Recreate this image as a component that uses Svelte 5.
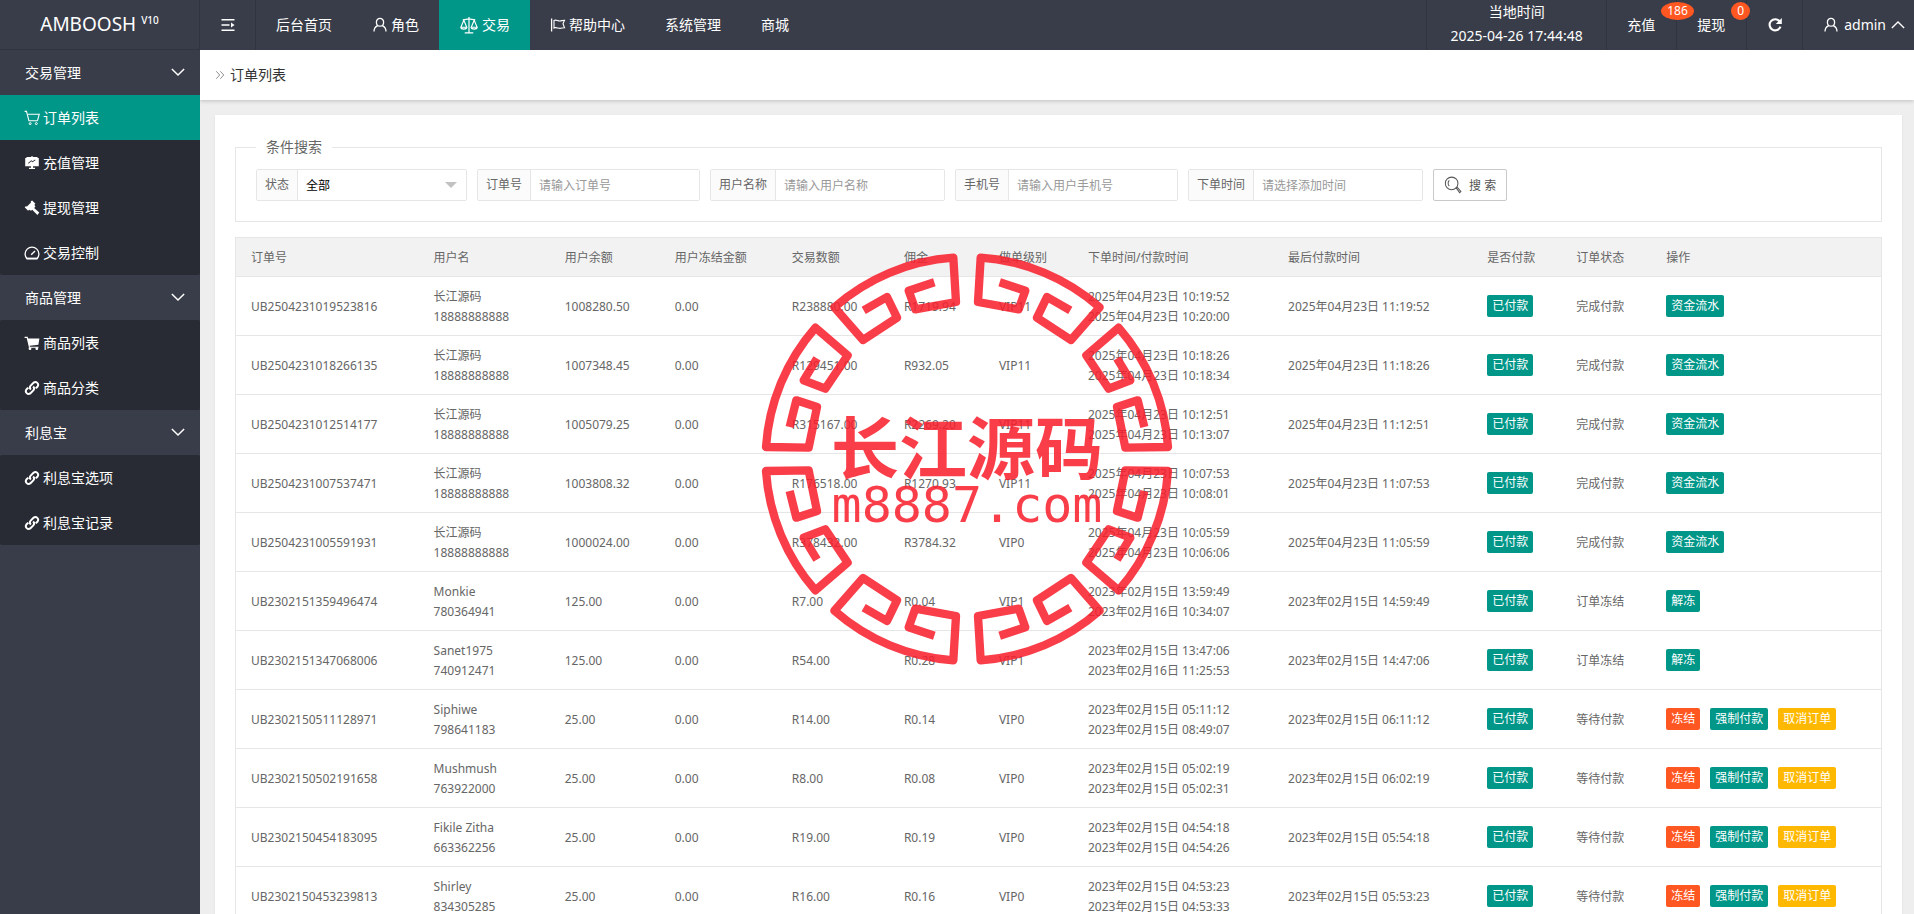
<script lang="ts">
  type Shape = { d: string; fill?: boolean; width?: number };
  type Action = { text: string; tone: string };

  // all icons live on a 16x16 grid
  const icons: Record<string, Shape[]> = {
    toggle: [
      { d: 'M1.5 2.8h13M1.5 8h8M1.5 13.2h13', width: 1.6 },
      { d: 'M11 5.6v4.8L14.6 8z', fill: true }
    ],
    user: [
      { d: 'M8 1.4a3.6 3.6 0 0 1 3.6 3.8c0 2.2-1.5 4-3.6 4s-3.6-1.8-3.6-4A3.6 3.6 0 0 1 8 1.4z', width: 1.3 },
      { d: 'M5.7 8.6C3.4 9.6 2 11.7 2 14.6M10.3 8.6c2.3 1 3.7 3.1 3.7 6', width: 1.3 }
    ],
    scale: [
      { d: 'M8 .8v13.7M4.2 15h7.6M2.4 3.4C4.5 3.6 6 2.6 8 2.6s3.5 1 5.6.8', width: 1.1 },
      { d: 'M3.4 3.8L.8 10h5.2zM12.6 3.8L10 10h5.2z', width: 1 },
      { d: 'M.8 10.2c.4 2 4.8 2 5.2 0M10 10.2c.4 2 4.8 2 5.2 0', width: 1.2 }
    ],
    flag: [
      { d: 'M1.6 1.5v13', width: 1.3 },
      { d: 'M4 3.4c2-1.2 4 .9 6 .6 1.5-.1 2.7-.8 4.5-.8L13 6.7l1.5 4c-2 0-3 .7-4.5.7-2 0-4-1.5-6-.4z', width: 1.1 }
    ],
    cartLine: [
      { d: 'M.6 1.4h1.9l2.4 9.3h8.7M4 4.3h11.2l-1.7 6.4', width: 1.1 },
      { d: 'M6.2 12.6a1 1 0 1 1 0 2 1 1 0 0 1 0-2zM12.3 12.6a1 1 0 1 1 0 2 1 1 0 0 1 0-2z', width: 1 }
    ],
    board: [
      { d: 'M2.5 2h4.300l1.200-1 1.200 1h4.300v1h1.300v8.300H9v1.500h2V14H5v-1.200h2v-1.500H1.200V3h1.300zM4.500 8.700l2.800-2.500 1.200 1 3-2-.4-.6-2.500 1.700-1.300-1-3.200 2.800z', fill: true }
    ],
    gavel: [
      { d: 'M8.2.6l3.200 3.200-1 .9 1 2-1.300 1.300 5.200 4.600-1.900 2.300-5.200-5.200-1.100 1.100-2-1-1 .9-3.400-3.500 1-1 1.300.3 4-4-.3-1.300z', fill: true }
    ],
    gauge: [
      { d: 'M3 13.8A6.900 6.900 0 1 1 13 13.800z', width: 1.3 },
      { d: 'M7.2 9.8L11 6', width: 1.4 },
      { d: 'M2.5 12.600h11v1.500h-11z', fill: true }
    ],
    cart: [
      { d: 'M.6 1.800h3l.6 1.700h11.200l-1 6.200-8.800 1 .3 1h8.600v1H5L2.700 3H.6z', fill: true },
      { d: 'M6 12.300a1.400 1.400 0 1 1 0 2.800 1.400 1.400 0 0 1 0-2.800zM12.800 12.300a1.400 1.400 0 1 1 0 2.800 1.400 1.400 0 0 1 0-2.800z', fill: true }
    ],
    link: [
      { d: 'M6.900 9.500a2.800 2.800 0 0 1-.2-3.900l3-3a2.800 2.800 0 0 1 3.900 3.900l-1.900 1.900', width: 2 },
      { d: 'M9.100 6.500a2.800 2.800 0 0 1 .2 3.900l-3 3a2.800 2.800 0 0 1-3.900-3.900l1.900-1.900', width: 2 }
    ],
    refresh: [
      { d: 'M12.6 4.3A5.600 5.600 0 1 0 13.500 9.700', width: 2.1 },
      { d: 'M14.8 1v6H8.800z', fill: true }
    ],
    down: [{ d: 'M1 4.5l7 7 7-7', width: 1.7 }],
    up: [{ d: 'M1 11.5l7-7 7 7', width: 1.5 }],
    double: [{ d: 'M2 2l5.500 6L2 14M8.500 2l5.500 6-5.500 6', width: 1.5 }],
    search: [
      { d: 'M6.8 1a5.600 5.600 0 1 1 0 11.200 5.600 5.600 0 0 1 0-11.200z', width: 0.9 },
      { d: 'M4.7 3.8c-1.400 1.400-1.400 3.800 0 5.200M10.800 10.600l.9-.7 3.300 3.900-1.100 1z', width: 0.9 }
    ]
  };

  const topNav = [
    { text: '后台首页' },
    { text: '角色', icon: 'user' },
    { text: '交易', icon: 'scale', active: true },
    { text: '帮助中心', icon: 'flag' },
    { text: '系统管理' },
    { text: '商城' }
  ];

  const sideNav = [
    {
      title: '交易管理',
      items: [
        { text: '订单列表', icon: 'cartLine', active: true },
        { text: '充值管理', icon: 'board' },
        { text: '提现管理', icon: 'gavel' },
        { text: '交易控制', icon: 'gauge' }
      ]
    },
    {
      title: '商品管理',
      items: [
        { text: '商品列表', icon: 'cart' },
        { text: '商品分类', icon: 'link' }
      ]
    },
    {
      title: '利息宝',
      items: [
        { text: '利息宝选项', icon: 'link' },
        { text: '利息宝记录', icon: 'link' }
      ]
    }
  ];

  const filters = [
    { id: 'order', label: '订单号', placeholder: '请输入订单号' },
    { id: 'username', label: '用户名称', placeholder: '请输入用户名称' },
    { id: 'phone', label: '手机号', placeholder: '请输入用户手机号' },
    { id: 'addtime', label: '下单时间', placeholder: '请选择添加时间' }
  ];

  const columns = [
    { title: '订单号', width: 183 },
    { title: '用户名', width: 131 },
    { title: '用户余额', width: 110 },
    { title: '用户冻结金额', width: 117 },
    { title: '交易数额', width: 112 },
    { title: '佣金', width: 95 },
    { title: '做单级别', width: 89 },
    { title: '下单时间/付款时间', width: 200 },
    { title: '最后付款时间', width: 199 },
    { title: '是否付款', width: 89 },
    { title: '订单状态', width: 90 },
    { title: '操作', width: 230 }
  ];

  const done: Action[] = [{ text: '资金流水', tone: 'green' }];
  const frozen: Action[] = [{ text: '解冻', tone: 'green' }];
  const waiting: Action[] = [
    { text: '冻结', tone: 'red' },
    { text: '强制付款', tone: 'green' },
    { text: '取消订单', tone: 'yellow' }
  ];

  const cj = '长江源码';
  const phone = '18888888888';
  const d1 = '2025年04月23日';
  const d2 = '2023年02月15日';
  const d3 = '2023年02月16日';

  const orders = [
    { no: 'UB2504231019523816', name: cj, tel: phone, balance: '1008280.50', amount: 'R238880.00', fee: 'R1719.94', vip: 'VIP11', add: `${d1} 10:19:52`, pay: `${d1} 10:20:00`, end: `${d1} 11:19:52`, state: '完成付款', actions: done },
    { no: 'UB2504231018266135', name: cj, tel: phone, balance: '1007348.45', amount: 'R129451.00', fee: 'R932.05', vip: 'VIP11', add: `${d1} 10:18:26`, pay: `${d1} 10:18:34`, end: `${d1} 11:18:26`, state: '完成付款', actions: done },
    { no: 'UB2504231012514177', name: cj, tel: phone, balance: '1005079.25', amount: 'R315167.00', fee: 'R2269.20', vip: 'VIP11', add: `${d1} 10:12:51`, pay: `${d1} 10:13:07`, end: `${d1} 11:12:51`, state: '完成付款', actions: done },
    { no: 'UB2504231007537471', name: cj, tel: phone, balance: '1003808.32', amount: 'R176518.00', fee: 'R1270.93', vip: 'VIP11', add: `${d1} 10:07:53`, pay: `${d1} 10:08:01`, end: `${d1} 11:07:53`, state: '完成付款', actions: done },
    { no: 'UB2504231005591931', name: cj, tel: phone, balance: '1000024.00', amount: 'R378432.00', fee: 'R3784.32', vip: 'VIP0', add: `${d1} 10:05:59`, pay: `${d1} 10:06:06`, end: `${d1} 11:05:59`, state: '完成付款', actions: done },
    { no: 'UB2302151359496474', name: 'Monkie', tel: '780364941', balance: '125.00', amount: 'R7.00', fee: 'R0.04', vip: 'VIP1', add: `${d2} 13:59:49`, pay: `${d3} 10:34:07`, end: `${d2} 14:59:49`, state: '订单冻结', actions: frozen },
    { no: 'UB2302151347068006', name: 'Sanet1975', tel: '740912471', balance: '125.00', amount: 'R54.00', fee: 'R0.28', vip: 'VIP1', add: `${d2} 13:47:06`, pay: `${d3} 11:25:53`, end: `${d2} 14:47:06`, state: '订单冻结', actions: frozen },
    { no: 'UB2302150511128971', name: 'Siphiwe', tel: '798641183', balance: '25.00', amount: 'R14.00', fee: 'R0.14', vip: 'VIP0', add: `${d2} 05:11:12`, pay: `${d2} 08:49:07`, end: `${d2} 06:11:12`, state: '等待付款', actions: waiting },
    { no: 'UB2302150502191658', name: 'Mushmush', tel: '763922000', balance: '25.00', amount: 'R8.00', fee: 'R0.08', vip: 'VIP0', add: `${d2} 05:02:19`, pay: `${d2} 05:02:31`, end: `${d2} 06:02:19`, state: '等待付款', actions: waiting },
    { no: 'UB2302150454183095', name: 'Fikile Zitha', tel: '663362256', balance: '25.00', amount: 'R19.00', fee: 'R0.19', vip: 'VIP0', add: `${d2} 04:54:18`, pay: `${d2} 04:54:26`, end: `${d2} 05:54:18`, state: '等待付款', actions: waiting },
    { no: 'UB2302150453239813', name: 'Shirley', tel: '834305285', balance: '25.00', amount: 'R16.00', fee: 'R0.16', vip: 'VIP0', add: `${d2} 04:53:23`, pay: `${d2} 04:53:33`, end: `${d2} 05:53:23`, state: '等待付款', actions: waiting }
  ];

  // one quarter of the seal's ring, mirrored for the other three
  const fret = [
    'M98 -530L175 -505L155 -449L33 -471L41 -604A605 605 0 0 1 398 -455L312 -357L210 -424L240 -486L310 -446',
    'M450 -302L490 -236L425 -211L358 -311L455 -394A605 605 0 0 1 603 -36L475 -34L450 -156L512 -176L532 -96'
  ];
  const quarters = ['scale(1 1)', 'scale(-1 1)', 'scale(1 -1)', 'scale(-1 -1)'];

  let status = $state('all');
  let collapsed = $state(false);
</script>

{#snippet icon(name: string)}
  <svg class="icon" viewBox="0 0 16 16" aria-hidden="true">
    {#each icons[name] as shape}
      {#if shape.fill}
        <path d={shape.d} fill="currentColor" fill-rule="evenodd" />
      {:else}
        <path d={shape.d} fill="none" stroke="currentColor" stroke-width={shape.width} />
      {/if}
    {/each}
  </svg>
{/snippet}

<div class="layout">
  <header class="header">
    <a class="logo" href="#home">AMBOOSH<sup>V10</sup></a>
    <button type="button" class="toggle" aria-label="菜单" onclick={() => (collapsed = !collapsed)}>
      {@render icon('toggle')}
    </button>
    <nav class="top-nav">
      {#each topNav as item}
        <a href="#nav" class:active={item.active}>
          {#if item.icon}{@render icon(item.icon)}{/if}
          {item.text}
        </a>
      {/each}
    </nav>
    <div class="tools">
      <div class="clock">
        <span>当地时间</span>
        <time>2025-04-26 17:44:48</time>
      </div>
      <a class="tool" href="#recharge">充值<span class="badge">186</span></a>
      <a class="tool" href="#withdraw">提现<span class="badge">0</span></a>
      <button type="button" class="refresh" aria-label="刷新">{@render icon('refresh')}</button>
      <a class="account" href="#account">{@render icon('user')}<span>admin</span>{@render icon('up')}</a>
    </div>
  </header>

  <div class="body">
    {#if !collapsed}
      <aside class="side">
        {#each sideNav as group}
          <button type="button" class="group">{group.title}{@render icon('down')}</button>
          <ul>
            {#each group.items as item}
              <li>
                <a href="#menu" class:active={item.active}>{@render icon(item.icon)}{item.text}</a>
              </li>
            {/each}
          </ul>
        {/each}
      </aside>
    {/if}

    <div class="content">
      <div class="crumb">{@render icon('double')}<h1>订单列表</h1></div>

      <main class="card">
        <fieldset>
          <legend>条件搜索</legend>
          <form class="search" onsubmit={(e) => e.preventDefault()}>
            <div class="field">
              <label for="status">状态</label>
              <span class="select">
                <select id="status" bind:value={status}>
                  <option value="all">全部</option>
                  <option value="wait">等待付款</option>
                  <option value="done">完成付款</option>
                  <option value="frozen">订单冻结</option>
                </select>
              </span>
            </div>
            {#each filters as filter}
              <div class="field">
                <label for={filter.id}>{filter.label}</label>
                <input id={filter.id} type="text" placeholder={filter.placeholder} />
              </div>
            {/each}
            <button type="submit" class="submit">{@render icon('search')}搜 索</button>
          </form>
        </fieldset>

        <table>
          <colgroup>
            {#each columns as column}
              <col style="width: {column.width}px" />
            {/each}
          </colgroup>
          <thead>
            <tr>
              {#each columns as column}
                <th>{column.title}</th>
              {/each}
            </tr>
          </thead>
          <tbody>
            {#each orders as order}
              <tr>
                <td>{order.no}</td>
                <td>{order.name}<br />{order.tel}</td>
                <td>{order.balance}</td>
                <td>0.00</td>
                <td>{order.amount}</td>
                <td>{order.fee}</td>
                <td>{order.vip}</td>
                <td>{order.add}<br />{order.pay}</td>
                <td>{order.end}</td>
                <td class="buttons"><a class="btn green" href="#paid">已付款</a></td>
                <td>{order.state}</td>
                <td class="buttons">
                  <div class="actions">
                    {#each order.actions as action}
                      <button type="button" class="btn {action.tone}">{action.text}</button>
                    {/each}
                  </div>
                </td>
              </tr>
            {/each}
          </tbody>
        </table>
      </main>
    </div>
  </div>

  <svg class="seal" viewBox="-624 -624 1248 1248">
    {#each quarters as quarter}
      <g transform={quarter}>
        {#each fret as d}
          <path {d} />
        {/each}
      </g>
    {/each}
    <text class="seal-name" x="0" y="44">长江源码</text>
    <text class="seal-site" x="0" y="188">m8887.com</text>
  </svg>
</div>

<style>
  :global(body) {
    margin: 0;
    background: #eee;
  }

  .layout {
    position: relative;
    display: flex;
    flex-direction: column;
    height: 100vh;
    overflow: hidden;
    font: 14px/24px 'Noto Sans', 'Noto Sans CJK SC', sans-serif;
    color: #333;
  }

  .layout :is(button, input, select) {
    font-family: inherit;
    font-size: inherit;
  }

  a {
    color: inherit;
    text-decoration: none;
  }

  button {
    cursor: pointer;
  }

  .icon {
    flex: none;
    width: 16px;
    height: 16px;
  }

  .header {
    display: flex;
    flex: none;
    height: 50px;
    background: #393d49;
    color: #fff;
  }

  .logo {
    display: flex;
    align-items: center;
    justify-content: center;
    gap: 5px;
    box-sizing: border-box;
    width: 200px;
    padding-bottom: 2px;
    border-right: 1px solid #30343e;
    border-bottom: 1px solid #30343e;
    font-size: 19px;
  }

  .logo sup {
    padding-bottom: 8px;
    font-size: 10px;
    font-weight: 500;
    line-height: 10px;
  }

  .toggle,
  .refresh {
    display: flex;
    align-items: center;
    justify-content: center;
    box-sizing: border-box;
    width: 56px;
    padding: 0;
    border: 0;
    border-right: 1px solid #30343e;
    background: none;
    color: #fff;
  }

  .top-nav {
    display: flex;
    flex: 1;
  }

  .top-nav a {
    display: flex;
    align-items: center;
    gap: 3px;
    padding: 0 20px;
    white-space: nowrap;
  }

  .top-nav a.active {
    background: #009688;
  }

  .top-nav a.active .icon {
    width: 20px;
    height: 18px;
  }

  .tools {
    display: flex;
  }

  .clock {
    display: flex;
    flex-direction: column;
    align-items: center;
    width: 179px;
    border-left: 1px solid #30343e;
    border-right: 1px solid #30343e;
  }

  .tool {
    position: relative;
    box-sizing: border-box;
    width: 70px;
    padding-left: 20px;
    border-right: 1px solid #30343e;
    line-height: 50px;
  }

  .badge {
    position: absolute;
    top: 2px;
    left: 54px;
    z-index: 1;
    padding: 0 6px;
    border-radius: 50%;
    background: #ff5722;
    font-size: 12px;
    line-height: 18px;
  }

  .account {
    display: flex;
    align-items: center;
    gap: 5px;
    padding: 0 9px 0 20px;
  }

  .account .icon:last-child,
  .group .icon {
    width: 14px;
    height: 14px;
  }

  .body {
    display: flex;
    flex: 1;
    min-height: 0;
  }

  .side {
    flex: none;
    width: 200px;
    background: #393d49;
    color: #fff;
  }

  .group {
    display: flex;
    align-items: center;
    justify-content: space-between;
    width: 100%;
    height: 45px;
    padding: 0 15px 2px 25px;
    border: 0;
    background: none;
    color: #fff;
  }

  .side ul {
    margin: 0;
    padding: 0;
    border-radius: 2px;
    background: #282b33;
    list-style: none;
  }

  .side li a {
    display: flex;
    align-items: center;
    gap: 3px;
    height: 45px;
    padding-left: 24px;
  }

  .side li a.active {
    background: #009688;
  }

  .content {
    flex: 1;
    min-width: 0;
    overflow-y: auto;
    background: #eee;
    scrollbar-width: none;
  }

  .crumb {
    display: flex;
    align-items: center;
    gap: 5px;
    height: 50px;
    padding-left: 15px;
    background: #fff;
    box-shadow: 0 1px 4px rgba(0, 0, 0, 0.2);
  }

  .crumb .icon {
    width: 10px;
    height: 10px;
    color: #888;
  }

  .crumb h1 {
    margin: 0;
    font-size: 14px;
    font-weight: 400;
  }

  .card {
    margin: 15px 12px 0 15px;
    padding: 20px;
    background: #fff;
    box-shadow: 0 1px 2px rgba(0, 0, 0, 0.08);
    font-size: 12px;
    line-height: 20px;
    color: #666;
  }

  fieldset {
    min-width: 0;
    margin: 0 0 15px;
    padding: 10px 20px 20px;
    border: 1px solid #e6e6e6;
  }

  legend {
    padding: 0 10px;
    font-size: 14px;
    line-height: 24px;
  }

  .search {
    display: flex;
    flex-wrap: wrap;
    gap: 10px;
  }

  .field {
    display: flex;
    box-sizing: border-box;
    height: 32px;
    border: 1px solid #e6e6e6;
    border-radius: 2px;
  }

  .field label {
    padding: 0 8px;
    border-right: 1px solid #e6e6e6;
    background: #fbfbfb;
    line-height: 30px;
  }

  .field input,
  .field select {
    box-sizing: border-box;
    width: 168px;
    height: 30px;
    padding: 0 8px;
    border: 0;
    outline: 0;
    background: #fff;
    color: #000;
  }

  .field select {
    appearance: none;
  }

  .field input::placeholder {
    color: #999;
  }

  .select {
    position: relative;
  }

  .select::after {
    content: '';
    position: absolute;
    top: 12px;
    right: 9px;
    border: 6px solid transparent;
    border-top-color: #c2c2c2;
    border-bottom: 0;
    pointer-events: none;
  }

  .submit {
    display: flex;
    align-items: center;
    gap: 7px;
    height: 32px;
    padding: 0 10px;
    border: 1px solid #c9c9c9;
    border-radius: 2px;
    background: #fff;
    color: #555;
    white-space: nowrap;
  }

  .submit .icon {
    width: 18px;
    height: 18px;
  }

  table {
    width: 100%;
    border: 1px solid #e6e6e6;
    border-collapse: collapse;
    table-layout: fixed;
  }

  th,
  td {
    padding: 10px 15px 8px;
    border-bottom: 1px solid #e6e6e6;
    font-weight: 400;
    text-align: left;
    white-space: nowrap;
  }

  th {
    background: #f2f2f2;
  }

  td.buttons {
    padding: 9px 15px;
  }

  .actions {
    display: flex;
    gap: 10px;
  }

  .btn {
    display: block;
    width: fit-content;
    height: 22px;
    padding: 0 5px;
    border: 0;
    border-radius: 2px;
    color: #fff;
    line-height: 22px;
  }

  .green {
    background: #009688;
  }

  .red {
    background: #ff5722;
  }

  .yellow {
    background: #ffb800;
  }

  .seal {
    position: absolute;
    top: 251px;
    left: calc(50% + 10px);
    width: 416px;
    height: 416px;
    margin-left: -208px;
    opacity: 0.86;
    pointer-events: none;
  }

  .seal path {
    fill: none;
    stroke: #f81f2d;
    stroke-width: 25px;
    stroke-linejoin: round;
  }

  .seal text {
    fill: #f81f2d;
    text-anchor: middle;
  }

  .seal-name {
    font-family: 'Noto Sans CJK SC', sans-serif;
    font-size: 204px;
    font-weight: 700;
  }

  .seal-site {
    font-family: 'DejaVu Sans Mono', monospace;
    font-size: 150px;
  }
</style>
